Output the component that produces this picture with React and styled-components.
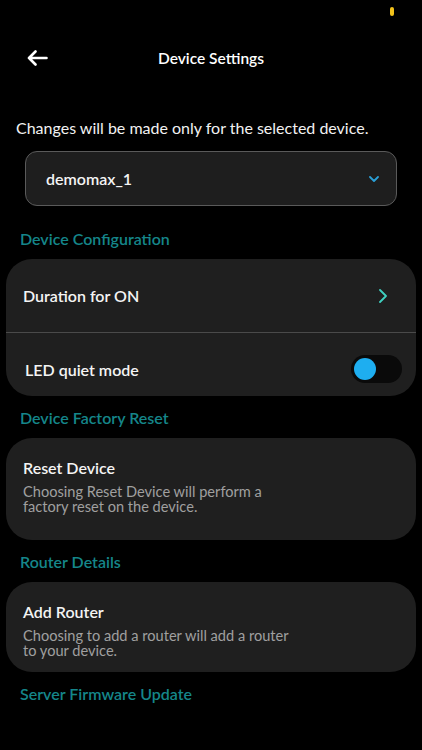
import React, {useState} from 'react';
import styled, {createGlobalStyle} from 'styled-components';

const GlobalStyle = createGlobalStyle`
    html, body {
        margin: 0;
        padding: 0;
        background: #000;
    }
    body {
        font-family: Lato, "Noto Sans", sans-serif;
        color: #fff;
    }
    * { box-sizing: border-box; }
`;

const Page = styled.div`
    width: 422px;
    height: 750px;
    background: #000;
    overflow: hidden;
    position: relative;
`;

const Battery = styled.div`
    position: absolute;
    top: 7px;
    left: 390px;
    width: 4px;
    height: 9px;
    border-radius: 2px;
    background: #f2c21b;
`;

const Header = styled.header`
    display: flex;
    align-items: center;
    height: 44px;
    margin-top: 36px;
    padding: 0 24px;
    position: relative;

    & h1 {
        margin: 0;
        position: absolute;
        left: 0;
        right: 0;
        text-align: center;
        font-size: 15.5px;
        font-weight: 600;
        pointer-events: none;
    }
`;

const BackBtn = styled.button`
    background: none;
    border: 0;
    padding: 0;
    width: 26px;
    height: 26px;
    display: flex;
    align-items: center;
    justify-content: center;
    cursor: pointer;
`;

const Notice = styled.p`
    margin: 37px 0 0;
    padding-left: 16px;
    font-size: 16px;
    line-height: 22px;
    color: #f2f2f2;
`;

const Select = styled.div`
    margin: 12px 25px 0;
    height: 55px;
    border: 1px solid #5a5a5a;
    border-radius: 12px;
    background: #1e1e1e;
    display: flex;
    align-items: center;
    justify-content: space-between;
    padding: 0 17px 0 20px;
    font-size: 16px;
    font-weight: 600;
    color: #f4f4f4;
`;

const SectionTitle = styled.h2`
    margin: ${p => p.$top}px 0 0;
    padding-left: 20px;
    font-size: 16px;
    line-height: 20px;
    font-weight: 600;
    color: #15868a;
`;

const Card = styled.div`
    margin: 10px 6px 0;
    background: #1f1f1f;
    border-radius: 26px;
    overflow: hidden;
`;

const Row = styled.div`
    display: flex;
    align-items: center;
    justify-content: space-between;
    height: ${p => p.$h}px;
    padding: ${p => p.$pt || 0}px 14px 0 ${p => p.$pl || 17}px;
    border-top: ${p => (p.$divider ? '1px solid #4a4a4a' : 'none')};
    font-size: 16px;
    font-weight: 600;
    color: #f4f4f4;
`;

const Info = styled.div`
    padding: 20px 17px 0 17px;
    height: ${p => p.$h}px;

    & h3 {
        margin: 0;
        font-size: 16px;
        line-height: 20px;
        font-weight: 600;
        color: #f4f4f4;
    }
    & p {
        margin: 6px 0 0;
        max-width: 282px;
        font-size: 14.6px;
        line-height: 15px;
        color: #a0a0a0;
    }
`;

const Toggle = styled.button`
    width: 51px;
    height: 28px;
    border-radius: 14px;
    border: 0;
    padding: 3px;
    background: #0a0a0a;
    display: flex;
    justify-content: ${p => (p.$on ? 'flex-end' : 'flex-start')};
    cursor: pointer;

    &::after {
        content: '';
        width: 22px;
        height: 22px;
        border-radius: 50%;
        background: #1eaef0;
    }
`;

const App = () => {
    const [quiet, setQuiet] = useState(false);

    return (
        <Page>
            <GlobalStyle />
            <Battery />
            <Header>
                <BackBtn aria-label="back">
                    <svg width="21" height="16" viewBox="0 0 21 16" fill="none" stroke="#fff" strokeWidth="2.6" strokeLinecap="round" strokeLinejoin="round">
                        <path d="M19.5 8H2M8.5 1.5L2 8l6.5 6.5" />
                    </svg>
                </BackBtn>
                <h1>Device Settings</h1>
            </Header>

            <Notice>Changes will be made only for the selected device.</Notice>
            <Select>
                <span>demomax_1</span>
                <svg width="10" height="6" viewBox="0 0 10 6" fill="none" stroke="#2a9fd6" strokeWidth="1.8" strokeLinecap="round" strokeLinejoin="round">
                    <path d="M1 1l4 4 4-4" />
                </svg>
            </Select>

            <SectionTitle $top={23}>Device Configuration</SectionTitle>
            <Card>
                <Row $h={73}>
                    <span>Duration for ON</span>
                    <svg width="8" height="14" viewBox="0 0 8 14" fill="none" stroke="#3fd0c0" strokeWidth="1.8" strokeLinecap="round" strokeLinejoin="round" style={{marginRight: 15}}>
                        <path d="M1 1l6 6-6 6" />
                    </svg>
                </Row>
                <Row $h={64} $pt={9} $divider $pl={19}>
                    <span>LED quiet mode</span>
                    <Toggle $on={quiet} onClick={() => setQuiet(!quiet)} aria-label="LED quiet mode" />
                </Row>
            </Card>

            <SectionTitle $top={12}>Device Factory Reset</SectionTitle>
            <Card>
                <Info $h={102}>
                    <h3>Reset Device</h3>
                    <p>Choosing Reset Device will perform a factory reset on the device.</p>
                </Info>
            </Card>

            <SectionTitle $top={12}>Router Details</SectionTitle>
            <Card>
                <Info $h={90}>
                    <h3>Add Router</h3>
                    <p>Choosing to add a router will add a router to your device.</p>
                </Info>
            </Card>

            <SectionTitle $top={12}>Server Firmware Update</SectionTitle>
        </Page>
    );
};

export default App;
